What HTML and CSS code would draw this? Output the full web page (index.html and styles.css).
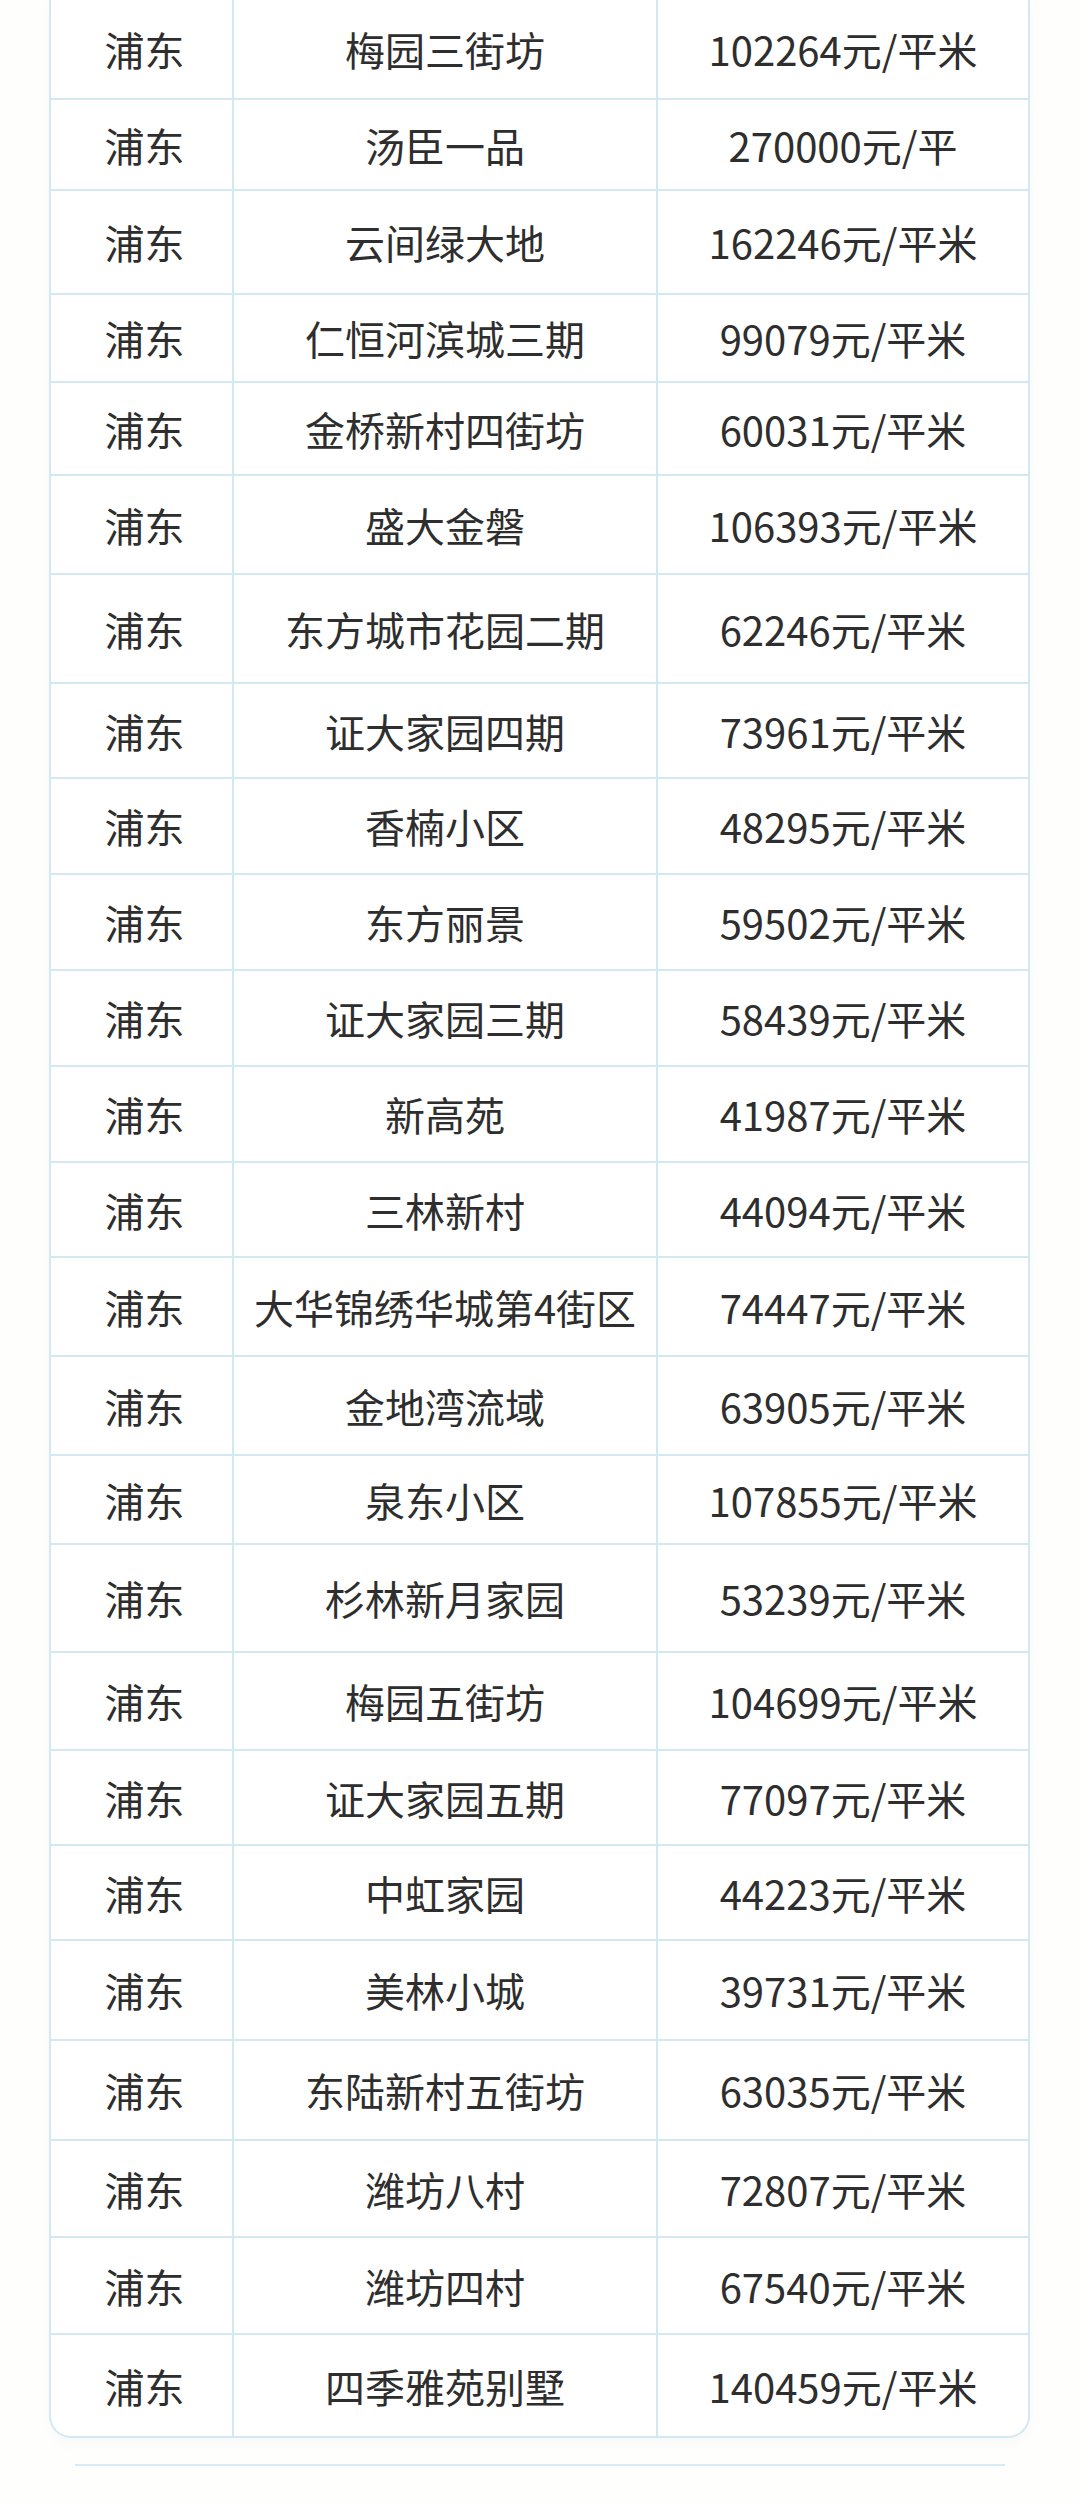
FILE: index.html
```html
<!DOCTYPE html>
<html lang="zh-CN">
<head>
<meta charset="utf-8">
<title>浦东小区房价</title>
<link rel="stylesheet" href="styles.css">
</head>
<body>
<div class="page">
  <div class="price-table">
    <div class="cell">浦东</div><div class="cell">梅园三街坊</div><div class="cell">102264元/平米</div>
    <div class="cell">浦东</div><div class="cell">汤臣一品</div><div class="cell">270000元/平</div>
    <div class="cell">浦东</div><div class="cell">云间绿大地</div><div class="cell">162246元/平米</div>
    <div class="cell">浦东</div><div class="cell">仁恒河滨城三期</div><div class="cell">99079元/平米</div>
    <div class="cell">浦东</div><div class="cell">金桥新村四街坊</div><div class="cell">60031元/平米</div>
    <div class="cell">浦东</div><div class="cell">盛大金磐</div><div class="cell">106393元/平米</div>
    <div class="cell">浦东</div><div class="cell">东方城市花园二期</div><div class="cell">62246元/平米</div>
    <div class="cell">浦东</div><div class="cell">证大家园四期</div><div class="cell">73961元/平米</div>
    <div class="cell">浦东</div><div class="cell">香楠小区</div><div class="cell">48295元/平米</div>
    <div class="cell">浦东</div><div class="cell">东方丽景</div><div class="cell">59502元/平米</div>
    <div class="cell">浦东</div><div class="cell">证大家园三期</div><div class="cell">58439元/平米</div>
    <div class="cell">浦东</div><div class="cell">新高苑</div><div class="cell">41987元/平米</div>
    <div class="cell">浦东</div><div class="cell">三林新村</div><div class="cell">44094元/平米</div>
    <div class="cell">浦东</div><div class="cell">大华锦绣华城第4街区</div><div class="cell">74447元/平米</div>
    <div class="cell">浦东</div><div class="cell">金地湾流域</div><div class="cell">63905元/平米</div>
    <div class="cell">浦东</div><div class="cell">泉东小区</div><div class="cell">107855元/平米</div>
    <div class="cell">浦东</div><div class="cell">杉林新月家园</div><div class="cell">53239元/平米</div>
    <div class="cell">浦东</div><div class="cell">梅园五街坊</div><div class="cell">104699元/平米</div>
    <div class="cell">浦东</div><div class="cell">证大家园五期</div><div class="cell">77097元/平米</div>
    <div class="cell">浦东</div><div class="cell">中虹家园</div><div class="cell">44223元/平米</div>
    <div class="cell">浦东</div><div class="cell">美林小城</div><div class="cell">39731元/平米</div>
    <div class="cell">浦东</div><div class="cell">东陆新村五街坊</div><div class="cell">63035元/平米</div>
    <div class="cell">浦东</div><div class="cell">潍坊八村</div><div class="cell">72807元/平米</div>
    <div class="cell">浦东</div><div class="cell">潍坊四村</div><div class="cell">67540元/平米</div>
    <div class="cell">浦东</div><div class="cell">四季雅苑别墅</div><div class="cell">140459元/平米</div>
  </div>
  <div class="rule"></div>
</div>
</body>
</html>
```

FILE: styles.css
```css
html, body {
  margin: 0;
  padding: 0;
  background: #fefefd;
}

.page {
  width: 1080px;
  height: 2502px;
  overflow: hidden;
  padding-left: 49px;
  box-sizing: border-box;
  font-family: "Noto Sans CJK SC", "Noto Sans", sans-serif;
}

.price-table {
  width: 981px;
  box-sizing: border-box;
  background: #ffffff;
  border: 2px solid #d3e9f2;
  border-top: none;
  border-radius: 0 0 22px 22px;
  overflow: hidden;
  display: grid;
  grid-template-columns: 183px 424px 1fr;
  grid-template-rows: 100px 91px 104px 88px 93px 99px 109px 95px 96px 96px 96px 96px 95px 99px 99px 89px 108px 98px 95px 95px 100px 100px 97px 97px 101px;
  box-shadow: 0 6px 10px rgba(200, 210, 215, 0.12);
}

.cell {
  display: flex;
  align-items: center;
  justify-content: center;
  box-sizing: border-box;
  border-right: 2px solid #d3e9f2;
  border-bottom: 2px solid #d3e9f2;
  font-size: 40px;
  color: #2e2e2e;
  white-space: nowrap;
}

.cell:nth-child(3n+1) {
  padding-left: 6px;
}

.cell:nth-child(3n) {
  border-right: none;
}

.cell:nth-last-child(-n+3) {
  border-bottom: none;
}

.rule {
  width: 930px;
  height: 2px;
  margin-top: 26px;
  margin-left: 26px;
  background: #d6ebf3;
}
```
